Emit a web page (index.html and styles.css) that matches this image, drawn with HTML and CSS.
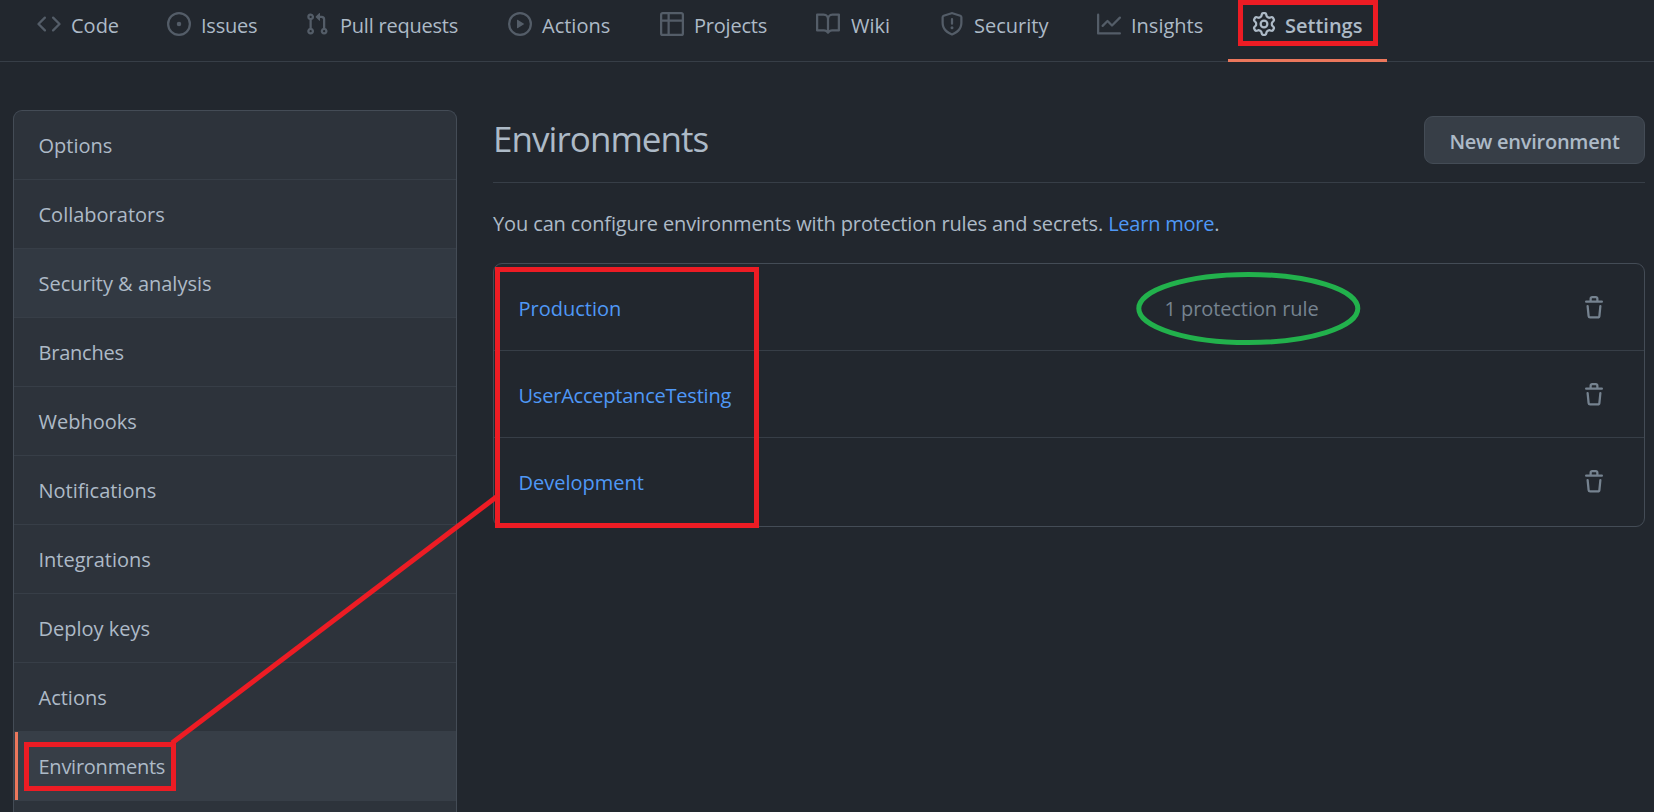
FILE: index.html
```html
<!DOCTYPE html>
<html lang="en">
<head>
<meta charset="utf-8">
<title>Environments</title>
<link rel="stylesheet" href="styles.css">
</head>
<body>
<svg class="sprite" aria-hidden="true">
  <symbol id="trash" viewBox="0 0 16 16"><path fill-rule="evenodd" d="M6.5 1.75a.25.25 0 01.25-.25h2.5a.25.25 0 01.25.25V3h-3V1.75zm4.5 0V3h2.25a.75.75 0 010 1.5H2.75a.75.75 0 010-1.5H5V1.75C5 .784 5.784 0 6.75 0h2.5C10.216 0 11 .784 11 1.75zM4.496 6.675a.75.75 0 10-1.492.15l.66 6.6A1.75 1.75 0 005.405 15h5.19c.9 0 1.652-.681 1.741-1.576l.66-6.6a.75.75 0 00-1.492-.149l-.66 6.6a.25.25 0 01-.249.225h-5.19a.25.25 0 01-.249-.225l-.66-6.6z"/></symbol>
</svg>
<nav class="tabs">
  <a class="tab"><svg class="icon" viewBox="0 0 16 16"><path fill-rule="evenodd" d="M4.72 3.22a.75.75 0 011.06 1.06L2.06 8l3.72 3.72a.75.75 0 11-1.06 1.06L.47 8.53a.75.75 0 010-1.06l4.25-4.25zm6.56 0a.75.75 0 10-1.06 1.06L13.94 8l-3.72 3.72a.75.75 0 101.06 1.06l4.25-4.25a.75.75 0 000-1.06l-4.25-4.25z"/></svg><span>Code</span></a>
  <a class="tab"><svg class="icon" viewBox="0 0 16 16"><path d="M8 9.5a1.5 1.5 0 100-3 1.5 1.5 0 000 3z"/><path fill-rule="evenodd" d="M8 0a8 8 0 100 16A8 8 0 008 0zM1.5 8a6.5 6.5 0 1113 0 6.5 6.5 0 01-13 0z"/></svg><span class="tight">Issues</span></a>
  <a class="tab"><svg class="icon" viewBox="0 0 16 16"><path fill-rule="evenodd" d="M7.177 3.073L9.573.677A.25.25 0 0110 .854v4.792a.25.25 0 01-.427.177L7.177 3.427a.25.25 0 010-.354zM3.75 2.5a.75.75 0 100 1.5.75.75 0 000-1.5zm-2.25.75a2.25 2.25 0 113 2.122v5.256a2.251 2.251 0 11-1.5 0V5.372A2.25 2.25 0 011.5 3.25zM11 2.5h-1V4h1a1 1 0 011 1v5.628a2.251 2.251 0 101.5 0V5A2.5 2.5 0 0011 2.5zm1 10.25a.75.75 0 111.5 0 .75.75 0 01-1.5 0zM3.75 12a.75.75 0 100 1.5.75.75 0 000-1.5z"/></svg><span class="pulls">Pull requests</span></a>
  <a class="tab"><svg class="icon" viewBox="0 0 16 16"><path fill-rule="evenodd" d="M1.5 8a6.5 6.5 0 1113 0 6.5 6.5 0 01-13 0zM8 0a8 8 0 100 16A8 8 0 008 0zM6.379 5.227A.25.25 0 006 5.442v5.117a.25.25 0 00.379.214l4.264-2.559a.25.25 0 000-.428L6.379 5.227z"/></svg><span>Actions</span></a>
  <a class="tab"><svg class="icon" viewBox="0 0 16 16"><path fill-rule="evenodd" d="M0 1.75C0 .784.784 0 1.75 0h12.5C15.216 0 16 .784 16 1.75v12.5A1.75 1.75 0 0114.25 16H1.75A1.75 1.75 0 010 14.25V1.75zM1.75 1.5a.25.25 0 00-.25.25V5H5V1.5H1.75zM6.5 1.5V5h8V1.75a.25.25 0 00-.25-.25H6.5zM14.5 6.5h-8v8h7.75a.25.25 0 00.25-.25V6.5zM5 14.5v-8H1.5v7.75c0 .138.112.25.25.25H5z"/></svg><span class="tight">Projects</span></a>
  <a class="tab"><svg class="icon" viewBox="0 0 16 16"><path fill-rule="evenodd" d="M0 1.75A.75.75 0 01.75 1h4.253c1.227 0 2.317.59 3 1.501A3.744 3.744 0 0111.006 1h4.245a.75.75 0 01.75.75v10.5a.75.75 0 01-.75.75h-4.507a2.25 2.25 0 00-1.591.659l-.622.621a.75.75 0 01-1.06 0l-.622-.621A2.25 2.25 0 005.258 13H.75a.75.75 0 01-.75-.75V1.75zm8.755 3a2.25 2.25 0 012.25-2.25H14.5v9h-3.757c-.71 0-1.4.201-1.992.572l.004-7.322zm-1.504 7.324l.004-5.073-.002-2.253A2.25 2.25 0 005.003 2.5H1.5v9h3.757a3.75 3.75 0 011.994.574z"/></svg><span class="wiki">Wiki</span></a>
  <a class="tab"><svg class="icon" viewBox="0 0 16 16"><path fill-rule="evenodd" d="M7.467.133a1.75 1.75 0 011.066 0l5.25 1.68A1.75 1.75 0 0115 3.48V7c0 1.566-.32 3.182-1.303 4.682-.983 1.498-2.585 2.813-5.032 3.855a1.7 1.7 0 01-1.33 0c-2.447-1.042-4.049-2.357-5.032-3.855C1.32 10.182 1 8.566 1 7V3.48a1.75 1.75 0 011.217-1.667l5.25-1.68zm.61 1.429a.25.25 0 00-.153 0l-5.25 1.68a.25.25 0 00-.174.238V7c0 1.358.275 2.666 1.057 3.86.784 1.194 2.121 2.34 4.366 3.297a.2.2 0 00.154 0c2.245-.956 3.582-2.104 4.366-3.298C13.225 9.666 13.5 8.36 13.5 7V3.48a.25.25 0 00-.174-.237l-5.25-1.68zM9 10.5a1 1 0 11-2 0 1 1 0 012 0zm-.25-5.75a.75.75 0 10-1.5 0v3a.75.75 0 001.5 0v-3z"/></svg><span>Security</span></a>
  <a class="tab"><svg class="icon" viewBox="0 0 16 16"><path fill-rule="evenodd" d="M1.5 1.75a.75.75 0 00-1.5 0v12.5c0 .414.336.75.75.75h14.5a.75.75 0 000-1.5H1.5V1.75zm14.28 2.53a.75.75 0 00-1.06-1.06L10 7.94 7.53 5.47a.75.75 0 00-1.06 0L3.22 8.72a.75.75 0 001.06 1.06L7 7.06l2.47 2.47a.75.75 0 001.06 0l5.25-5.25z"/></svg><span>Insights</span></a>
  <a class="tab tab-active"><svg class="icon" viewBox="0 0 16 16"><path fill-rule="evenodd" d="M7.429 1.525a6.593 6.593 0 011.142 0c.036.003.108.036.137.146l.289 1.105c.147.56.55.967.997 1.189.174.086.341.183.501.29.417.278.97.423 1.53.27l1.102-.303c.11-.03.175.016.195.046.219.31.41.641.573.989.014.031.022.11-.059.19l-.815.806c-.411.406-.562.957-.53 1.456a4.588 4.588 0 010 .582c-.032.499.119 1.05.53 1.456l.815.806c.08.08.073.159.059.19a6.494 6.494 0 01-.573.99c-.02.029-.086.074-.195.045l-1.103-.303c-.559-.153-1.112-.008-1.529.27-.16.107-.327.204-.5.29-.449.222-.851.628-.998 1.189l-.289 1.105c-.029.11-.101.143-.137.146a6.613 6.613 0 01-1.142 0c-.036-.003-.108-.037-.137-.146l-.289-1.105c-.147-.56-.55-.967-.997-1.189a4.502 4.502 0 01-.501-.29c-.417-.278-.97-.423-1.53-.27l-1.102.303c-.11.03-.175-.016-.195-.046a6.492 6.492 0 01-.573-.989c-.014-.031-.022-.11.059-.19l.815-.806c.411-.406.562-.957.53-1.456a4.587 4.587 0 010-.582c.032-.499-.119-1.05-.53-1.456l-.815-.806c-.08-.08-.073-.159-.059-.19a6.44 6.44 0 01.573-.99c.02-.029.086-.075.195-.045l1.103.303c.559.153 1.112.008 1.529-.27.16-.107.327-.204.5-.29.449-.222.851-.628.998-1.189l.289-1.105c.029-.11.101-.143.137-.146zM8 0c-.236 0-.47.01-.701.03-.743.065-1.29.615-1.458 1.261l-.29 1.106c-.017.066-.078.158-.211.224a5.994 5.994 0 00-.668.386c-.123.082-.233.09-.3.071L3.27 2.776c-.644-.177-1.392.02-1.82.63a7.977 7.977 0 00-.704 1.217c-.315.675-.111 1.422.363 1.891l.815.806c.05.048.098.147.088.294a6.084 6.084 0 000 .772c.01.147-.038.246-.088.294l-.815.806c-.474.469-.678 1.216-.363 1.891.2.428.436.835.704 1.218.428.609 1.176.806 1.82.63l1.103-.303c.066-.019.176-.011.299.071.213.143.436.272.668.386.133.066.194.158.212.224l.289 1.106c.169.646.715 1.196 1.458 1.26a8.094 8.094 0 001.402 0c.743-.064 1.29-.614 1.458-1.26l.29-1.106c.017-.066.078-.158.211-.224a5.98 5.98 0 00.668-.386c.123-.082.233-.09.3-.071l1.102.302c.644.177 1.392-.02 1.82-.63.268-.382.505-.789.704-1.217.315-.675.111-1.422-.364-1.891l-.814-.806c-.05-.048-.098-.147-.088-.294a6.1 6.1 0 000-.772c-.01-.147.039-.246.088-.294l.814-.806c.475-.469.679-1.216.364-1.891a7.992 7.992 0 00-.704-1.218c-.428-.609-1.176-.806-1.82-.63l-1.103.303c-.066.019-.176.011-.299-.071a5.991 5.991 0 00-.668-.386c-.133-.066-.194-.158-.212-.224L10.16 1.29C9.99.645 9.444.095 8.701.031A8.094 8.094 0 008 0zm1.5 8a1.5 1.5 0 11-3 0 1.5 1.5 0 013 0zM11 8a3 3 0 11-6 0 3 3 0 016 0z"/></svg><span>Settings</span></a>
</nav>
<div class="page">
  <aside class="menu">
    <a class="menu-item">Options</a>
    <a class="menu-item">Collaborators</a>
    <a class="menu-item hovered">Security &amp; analysis</a>
    <a class="menu-item tight">Branches</a>
    <a class="menu-item">Webhooks</a>
    <a class="menu-item">Notifications</a>
    <a class="menu-item">Integrations</a>
    <a class="menu-item">Deploy keys</a>
    <a class="menu-item">Actions</a>
    <a class="menu-item selected">Environments</a>
    <div class="menu-rest"></div>
  </aside>
  <main class="content">
    <header class="subhead">
      <h1>Environments</h1>
      <button class="btn" type="button">New environment</button>
    </header>
    <p class="intro">You can configure environments with protection rules and secrets. <a class="link tight">Learn more</a>.</p>
    <div class="list">
      <div class="row"><a class="link">Production</a><span class="rules">1 protection rule</span><svg class="icon trash"><use href="#trash"/></svg></div>
      <div class="row"><a class="link tight">UserAcceptanceTesting</a><span class="rules"></span><svg class="icon trash"><use href="#trash"/></svg></div>
      <div class="row"><a class="link">Development</a><span class="rules"></span><svg class="icon trash"><use href="#trash"/></svg></div>
    </div>
  </main>
</div>
<svg class="annotations" viewBox="0 0 1654 812">
  <g class="red">
    <rect x="1240.500" y="2.500" width="135" height="41"/>
    <rect x="497.500" y="269.500" width="259" height="256"/>
    <rect x="26.500" y="744.500" width="147" height="44"/>
    <path d="M172 743L497 496.500"/>
  </g>
  <ellipse class="green" cx="1248.300" cy="308.500" rx="109.500" ry="34"/>
</svg>
</body>
</html>
```
FILE: styles.css
```css
* { box-sizing: border-box; }

body {
  margin: 0;
  height: 812px;
  overflow: hidden;
  background: #22272e;
  color: #adbac7;
  font: 20px/30px "Open Sans", "Noto Sans", sans-serif;
}

.sprite { display: none; }

.icon {
  width: 24px;
  height: 24px;
  flex: none;
  fill: currentColor;
}

.tight { letter-spacing: -0.22px; }

.tabs {
  display: grid;
  grid-template-columns: 130px 138px 203px 152px 156px 124px 157px 155px 159px;
  height: 62px;
  padding-left: 13px;
  border-bottom: 1px solid #373e47;
}

.tab {
  display: flex;
  align-items: flex-start;
  gap: 10px;
  height: 62px;
  padding: 12px 0 0 24px;
  white-space: nowrap;
}

.tab .icon { color: #545d68; }
.tab span { line-height: 28px; }
.tab .pulls { padding-left: 1px; letter-spacing: -0.22px; }
.tab .wiki { padding-left: 1px; }

.tab-active {
  gap: 9px;
  border-bottom: 3px solid #ec775c;
  font-weight: 600;
}

.tab-active .icon { color: #adbac7; }

.page {
  display: flex;
  align-items: flex-start;
  gap: 36px;
  height: 750px;
  padding: 48px 9px 0 13px;
}

.menu {
  width: 444px;
  height: 702px;
  flex: none;
  border: 1px solid #444c56;
  border-bottom: 0;
  border-radius: 9px 9px 0 0;
  background: #2d333b;
  overflow: hidden;
}

.menu-item {
  display: block;
  height: 69px;
  padding: 20px 0 0 24.5px;
  border-bottom: 1px solid #373e47;
}

.menu-rest { height: 11px; }

.hovered { background: #323942; }

.selected {
  background: linear-gradient(#ec775c, #ec775c) 1px 0 / 3px 100% no-repeat #373e47;
  letter-spacing: -0.25px;
}

.content {
  flex: 1;
  min-width: 0;
}

.subhead {
  display: flex;
  justify-content: space-between;
  align-items: flex-start;
  height: 73px;
  padding-top: 6px;
  border-bottom: 1px solid #373e47;
}

h1 {
  margin: 0;
  font-size: 35px;
  font-weight: 400;
  line-height: 45px;
  letter-spacing: -0.95px;
}

.btn {
  width: 221px;
  height: 48px;
  padding: 3px 0 0;
  border: 1px solid #444c56;
  border-radius: 9px;
  background: #373e47;
  color: inherit;
  font: inherit;
  font-weight: 600;
  letter-spacing: -0.25px;
}

.intro {
  margin: 26px 0 24px;
  line-height: 30px;
  letter-spacing: -0.125px;
  white-space: nowrap;
}

.link { color: #4f98f6; }

.list {
  height: 264px;
  border: 1px solid #444c56;
  border-radius: 9px;
}

.row {
  display: grid;
  grid-template-columns: 646px 417px 24px;
  height: 87px;
  padding: 30px 0 0 24.5px;
}

.row:first-child { height: 86px; }
.row + .row { border-top: 1px solid #373e47; }

.rules { color: #768390; letter-spacing: -0.08px; }
.trash { margin-top: 2px; color: #768390; }

.annotations {
  position: absolute;
  inset: 0;
  width: 1654px;
  height: 812px;
  fill: none;
  stroke-width: 5px;
  pointer-events: none;
}

.red { stroke: #ed1c24; }
.green { stroke: #22b14c; }
```
